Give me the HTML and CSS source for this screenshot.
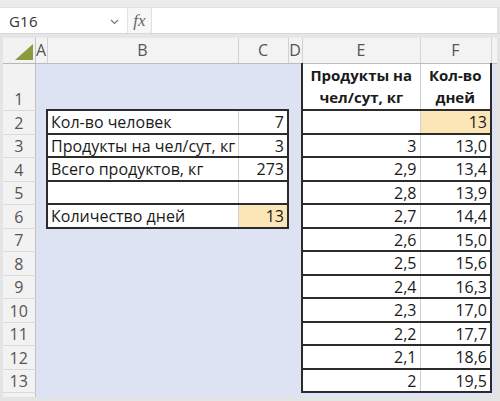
FILE: index.html
```html
<!DOCTYPE html>
<html>
<head>
<meta charset="utf-8">
<link rel="stylesheet" href="styles.css">
</head>
<body>
<div class="app">
  <div class="topband"></div>
  <div class="fbar">
    <div class="namebox">
      <span class="ref">G16</span>
      <svg class="chev" width="9" height="6" viewBox="0 0 9 6"><polyline points="1,1 4.5,4.5 8,1" fill="none" stroke="#777" stroke-width="1.2"/></svg>
    </div>
    <div class="fx">fx</div>
    <div class="finput"></div>
  </div>
  <div class="gap"></div>
  <div class="sheet">
    <table class="grid">
      <colgroup>
        <col class="w-rh"><col class="w-a"><col class="w-b"><col class="w-c"><col class="w-d"><col class="w-e"><col class="w-f"><col class="w-g">
      </colgroup>
      <tr class="r-h">
        <td class="corner"><svg class="tri" width="18" height="16" viewBox="0 0 18 16"><polygon points="0,16 18,16 18,0" fill="#8c9a3c"/></svg></td>
        <td class="ch">A</td><td class="ch">B</td><td class="ch">C</td><td class="ch">D</td><td class="ch">E</td><td class="ch">F</td><td class="ch"></td>
      </tr>
      <tr class="r-1">
        <td class="rh">1</td><td class="c"></td><td class="c"></td><td class="c"></td><td class="c"></td>
        <td class="w hd bl bb">Продукты на<br>чел/сут, кг</td><td class="w hd br bb vl">Кол-во<br>дней</td><td class="c"></td>
      </tr>
      <tr class="r-a">
        <td class="rh">2</td><td class="c"></td><td class="w txt bt bl bb">Кол-во человек</td><td class="w num bt br bb vl">7</td><td class="c"></td>
        <td class="w num bl bb"></td><td class="o num br bb vl">13</td><td class="c"></td>
      </tr>
      <tr class="r-b">
        <td class="rh">3</td><td class="c"></td><td class="w txt bl bb">Продукты на чел/сут, кг</td><td class="w num br bb vl">3</td><td class="c"></td>
        <td class="w num bl bb">3</td><td class="w num br bb vl">13,0</td><td class="c"></td>
      </tr>
      <tr class="r-a">
        <td class="rh">4</td><td class="c"></td><td class="w txt bl bb">Всего продуктов, кг</td><td class="w num br bb vl">273</td><td class="c"></td>
        <td class="w num bl bb">2,9</td><td class="w num br bb vl">13,4</td><td class="c"></td>
      </tr>
      <tr class="r-b">
        <td class="rh">5</td><td class="c"></td><td class="w txt bl bb"></td><td class="w num br bb vl"></td><td class="c"></td>
        <td class="w num bl bb">2,8</td><td class="w num br bb vl">13,9</td><td class="c"></td>
      </tr>
      <tr class="r-a">
        <td class="rh">6</td><td class="c"></td><td class="w txt bl bb">Количество дней</td><td class="o num br bb vl">13</td><td class="c"></td>
        <td class="w num bl bb">2,7</td><td class="w num br bb vl">14,4</td><td class="c"></td>
      </tr>
      <tr class="r-b">
        <td class="rh">7</td><td class="c"></td><td class="c"></td><td class="c"></td><td class="c"></td>
        <td class="w num bl bb">2,6</td><td class="w num br bb vl">15,0</td><td class="c"></td>
      </tr>
      <tr class="r-a">
        <td class="rh">8</td><td class="c"></td><td class="c"></td><td class="c"></td><td class="c"></td>
        <td class="w num bl bb">2,5</td><td class="w num br bb vl">15,6</td><td class="c"></td>
      </tr>
      <tr class="r-b">
        <td class="rh">9</td><td class="c"></td><td class="c"></td><td class="c"></td><td class="c"></td>
        <td class="w num bl bb">2,4</td><td class="w num br bb vl">16,3</td><td class="c"></td>
      </tr>
      <tr class="r-a">
        <td class="rh">10</td><td class="c"></td><td class="c"></td><td class="c"></td><td class="c"></td>
        <td class="w num bl bb">2,3</td><td class="w num br bb vl">17,0</td><td class="c"></td>
      </tr>
      <tr class="r-b">
        <td class="rh">11</td><td class="c"></td><td class="c"></td><td class="c"></td><td class="c"></td>
        <td class="w num bl bb">2,2</td><td class="w num br bb vl">17,7</td><td class="c"></td>
      </tr>
      <tr class="r-a">
        <td class="rh">12</td><td class="c"></td><td class="c"></td><td class="c"></td><td class="c"></td>
        <td class="w num bl bb">2,1</td><td class="w num br bb vl">18,6</td><td class="c"></td>
      </tr>
      <tr class="r-b">
        <td class="rh">13</td><td class="c"></td><td class="c"></td><td class="c"></td><td class="c"></td>
        <td class="w num bl bb">2</td><td class="w num br bb vl">19,5</td><td class="c"></td>
      </tr>
      <tr class="r-a">
        <td class="rh top">14</td><td class="c"></td><td class="c"></td><td class="c"></td><td class="c"></td><td class="c"></td><td class="c"></td><td class="c"></td>
      </tr>
    </table>
  </div>
</div>
</body>
</html>
```
FILE: styles.css
```css
* { box-sizing: border-box; }
html, body { margin: 0; padding: 0; }
body {
  width: 500px;
  height: 401px;
  overflow: hidden;
  background: #d4d4d4;
  font-family: "Open Sans", "Liberation Sans", sans-serif;
}
.app {
  width: 500px;
  height: 401px;
  display: flex;
  flex-direction: column;
  background: #e4e4e4;
}
.topband {
  height: 8px;
  background: #ebebeb;
  border-bottom: 1px solid #e0e0e0;
}
.fbar {
  height: 25px;
  display: flex;
  background: #ffffff;
  margin-right: 3px;
}
.namebox {
  width: 128px;
  display: flex;
  align-items: center;
  justify-content: space-between;
  padding: 0 8px 0 9px;
  border-right: 1px solid #e2e2e2;
}
.ref {
  font-size: 15px;
  color: #333;
  letter-spacing: 0.2px;
}
.chev { margin-top: 2px; }
.fx {
  width: 24px;
  display: flex;
  align-items: center;
  justify-content: center;
  font-family: "Liberation Serif", serif;
  font-style: italic;
  font-size: 17px;
  color: #666;
  background: #f7f7f7;
  border-right: 1px solid #e0e0e0;
}
.finput { flex: 1; }
.gap {
  height: 5px;
  background: #e6e6e6;
  border-top: 1px solid #d8d8d8;
}
.sheet {
  flex: 1;
  overflow: hidden;
  margin-left: 3px;
  margin-right: 3px;
  margin-bottom: 4px;
  background: #dde3f2;
}
.grid {
  border-collapse: collapse;
  table-layout: fixed;
  width: 494px;
  font-size: 16px;
  color: #1a1a1a;
}
.w-rh { width: 32px; }
.w-a { width: 12px; }
.w-b { width: 191px; }
.w-c { width: 50px; }
.w-d { width: 14px; }
.w-e { width: 118px; }
.w-f { width: 71px; }
.w-g { width: 6px; }
.r-h { height: 25px; }
.r-1 { height: 47px; }
.r-a { height: 24px; }
.r-b { height: 23px; }
td {
  padding: 0;
  white-space: nowrap;
  overflow: hidden;
  line-height: 20px;
}
.corner {
  background: #f2f2f2;
  border-right: 1px solid #c4c4c4;
  border-bottom: 1px solid #b8b8b8;
  text-align: right;
  vertical-align: bottom;
  padding: 0 2px 3px 0;
}
.tri { display: block; margin-left: auto; }
.ch {
  background: #f3f3f3;
  color: #555;
  text-align: center;
  border-right: 1px solid #d2d2d2;
  border-bottom: 1px solid #bdbdbd;
  font-size: 16px;
}
.rh {
  background: #f2f2f2;
  color: #555;
  text-align: center;
  vertical-align: bottom;
  border-bottom: 1px solid #dadada;
  border-right: 1px solid #c2c2c2;
  padding-bottom: 1px;
  font-size: 16px;
}
.rh.top { vertical-align: top; }
.c { background: #dde3f2; }
.w { background: #ffffff; }
.o { background: #fce6b8; }
.num { text-align: right; padding-right: 3px; }
.txt { padding-left: 3px; }
.hd {
  font-weight: 700;
  text-align: center;
  white-space: normal;
  line-height: 22px;
  font-size: 15px;
}
.vl { border-left: 1px solid #d0d0d0; }
.bt { border-top: 2px solid #2b2b2b; }
.bb { border-bottom: 2px solid #2b2b2b; }
.bl { border-left: 2px solid #2b2b2b; }
.br { border-right: 2px solid #2b2b2b; }
```
